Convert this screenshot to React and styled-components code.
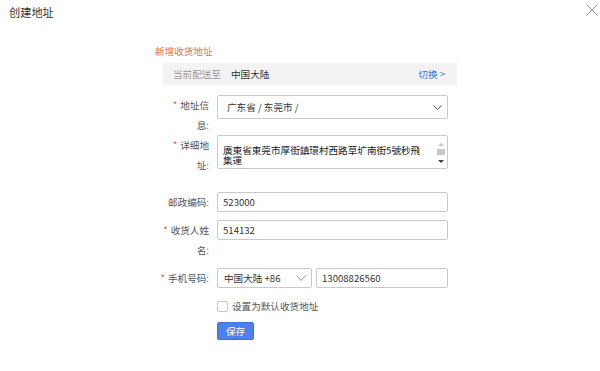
import React from "react";
import styled, { createGlobalStyle } from "styled-components";

const GlobalStyle = createGlobalStyle`
  html, body {
    margin: 0;
    padding: 0;
    background: #fff;
  }
  body {
    font-family: "Noto Sans CJK SC", "Noto Sans", sans-serif;
    font-size: 9.6px;
    color: #333;
  }
  * { box-sizing: border-box; }
`;

const Chevron = ({ w = 8, h = 5, color = "#666" }) => (
  <svg width={w} height={h} viewBox={`0 0 ${w} ${h}`}>
    <polyline
      points={`0.5,0.5 ${w / 2},${h - 0.5} ${w - 0.5},0.5`}
      fill="none"
      stroke={color}
      strokeWidth="1"
    />
  </svg>
);

const App = () => {
  return (
    <Page>
      <GlobalStyle />
      <Header>
        <Title>创建地址</Title>
        <Close>
          <svg width="12" height="12" viewBox="0 0 12 12">
            <line x1="0.5" y1="0.5" x2="11.5" y2="11.5" stroke="#999" strokeWidth="1" />
            <line x1="11.5" y1="0.5" x2="0.5" y2="11.5" stroke="#999" strokeWidth="1" />
          </svg>
        </Close>
      </Header>

      <Form>
        <Heading>新增收货地址</Heading>
        <RegionBar>
          <Muted>当前配送至</Muted>
          <Region>中国大陆</Region>
          <Switch>切换 &gt;</Switch>
        </RegionBar>

        <Row $mt={10}>
          <Label>
            <Star>*</Star>地址信<br />息:
          </Label>
          <SelectBox $w={231} $h={24} $pl={9}>
            <span>广东省 / 东莞市 /</span>
            <Chevron w={9} h={5} color="#555" />
          </SelectBox>
        </Row>

        <Row $mt={0}>
          <Label>
            <Star>*</Star>详细地<br />址:
          </Label>
          <TextBox>
            <TextContent>廣東省東莞市厚街鎮環村西路草圹南街5號秒飛集運</TextContent>
            <ScrollBar>
              <ArrowUp />
              <Thumb />
              <ArrowDown />
            </ScrollBar>
          </TextBox>
        </Row>

        <Row $mt={17}>
          <Label>邮政编码:</Label>
          <Input $w={231}>523000</Input>
        </Row>

        <Row $mt={8}>
          <Label>
            <Star>*</Star>收货人姓<br />名:
          </Label>
          <Input $w={231}>514132</Input>
        </Row>

        <Row $mt={8}>
          <Label>
            <Star>*</Star>手机号码:
          </Label>
          <Fields>
            <SelectBox $w={95} $h={20} $pl={6}>
              <span>中国大陆 +86</span>
              <Chevron w={10} h={6} color="#999" />
            </SelectBox>
            <Input $w={132}>13008826560</Input>
          </Fields>
        </Row>

        <CheckRow>
          <Box />
          <span>设置为默认收货地址</span>
        </CheckRow>

        <ButtonRow>
          <SaveButton>保存</SaveButton>
        </ButtonRow>
      </Form>
    </Page>
  );
};

export default App;

const Page = styled.div`
  width: 600px;
  height: 371px;
  overflow: hidden;
  background: #fff;
`;

const Header = styled.div`
  height: 25px;
  display: flex;
  justify-content: space-between;
  padding-left: 9px;
`;

const Title = styled.div`
  font-size: 11.2px;
  line-height: 25px;
  color: #333;
`;

const Close = styled.div`
  margin-top: 4px;
  margin-right: 2px;
  display: flex;
`;

const Form = styled.div`
  margin-left: 155px;
  width: 302px;
  display: flex;
  flex-direction: column;
`;

const Heading = styled.div`
  margin-top: 19px;
  line-height: 14px;
  color: #e0773a;
`;

const RegionBar = styled.div`
  margin-top: 5px;
  margin-left: 8px;
  height: 22px;
  background: #f3f3f3;
  display: flex;
  align-items: center;
  padding: 0 12px 0 10px;
`;

const Muted = styled.span`
  color: #9a9a9a;
`;

const Region = styled.span`
  color: #333;
  margin-left: 10px;
`;

const Switch = styled.span`
  margin-left: auto;
  color: #3d6fc7;
`;

const Row = styled.div`
  display: flex;
  align-items: flex-start;
  gap: 8px;
  margin-top: ${(p) => p.$mt}px;
`;

const Label = styled.div`
  width: 50px;
  margin-left: 4px;
  text-align: right;
  line-height: 20px;
  color: #555;
`;

const Star = styled.span`
  color: #ee6436;
  margin-right: 3px;
`;

const SelectBox = styled.div`
  width: ${(p) => p.$w}px;
  height: ${(p) => p.$h}px;
  border: 1px solid #c9c9c9;
  border-radius: 2px;
  display: flex;
  align-items: center;
  justify-content: space-between;
  padding: 0 5px 0 ${(p) => p.$pl}px;
  color: #333;
`;

const Fields = styled.div`
  display: flex;
  gap: 4px;
`;

const Input = styled.div`
  width: ${(p) => p.$w}px;
  height: 20px;
  border: 1px solid #c9c9c9;
  border-radius: 2px;
  display: flex;
  align-items: center;
  padding-left: 5px;
  color: #333;
`;

const TextBox = styled.div`
  width: 231px;
  height: 34px;
  border: 1px solid #c9c9c9;
  border-radius: 2px;
  display: flex;
`;

const TextContent = styled.div`
  flex: 1;
  padding: 9px 10px 0 5px;
  line-height: 10px;
  color: #222;
  overflow: hidden;
`;

const ScrollBar = styled.div`
  width: 12px;
  display: flex;
  flex-direction: column;
  align-items: center;
  padding-top: 7px;
`;

const ArrowUp = styled.div`
  width: 0;
  height: 0;
  border-left: 3px solid transparent;
  border-right: 3px solid transparent;
  border-bottom: 3px solid #c4c4c4;
`;

const Thumb = styled.div`
  width: 8px;
  height: 6px;
  margin-top: 3px;
  background: #c8c8c8;
`;

const ArrowDown = styled.div`
  width: 0;
  height: 0;
  margin-top: 5px;
  border-left: 3px solid transparent;
  border-right: 3px solid transparent;
  border-top: 3px solid #444;
`;

const CheckRow = styled.label`
  display: flex;
  align-items: center;
  gap: 4px;
  margin-top: 12px;
  padding-left: 62px;
  color: #555;
  line-height: 12px;
`;

const Box = styled.span`
  width: 11px;
  height: 11px;
  border: 1px solid #c9c9c9;
  border-radius: 2px;
  background: #fff;
`;

const ButtonRow = styled.div`
  margin-top: 10px;
  padding-left: 62px;
`;

const SaveButton = styled.button`
  width: 37px;
  height: 18px;
  padding: 0;
  border: 1px solid #3f72e0;
  border-radius: 2px;
  background: #4b80ee;
  color: #fff;
  font-family: inherit;
  font-size: 9.6px;
  line-height: 16px;
`;
